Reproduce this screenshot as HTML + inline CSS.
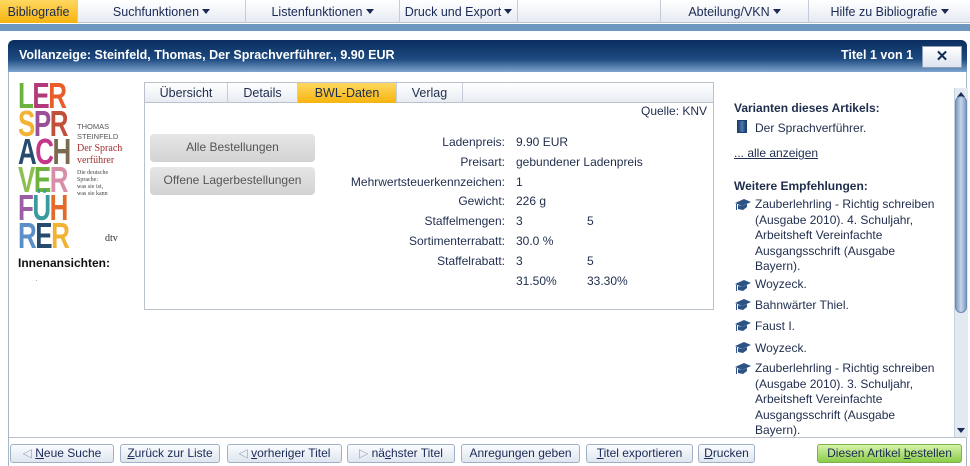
<!DOCTYPE html>
<html><head><meta charset="utf-8"><style>
*{margin:0;padding:0;box-sizing:border-box}
body{width:970px;height:466px;overflow:hidden;background:#fff;font-family:"Liberation Sans",Arial,sans-serif;font-size:12px;color:#1f2d4d;position:relative}
.a{position:absolute;white-space:nowrap}
.nav{position:absolute;left:0;top:0;width:970px;height:23px;background:linear-gradient(#fff,#e6ebf2);border-bottom:1px solid #b8c4d4}
.nav div{position:absolute;top:0;height:23px;line-height:24px;text-align:center;border-left:1px solid #c3ccd8;font-size:12.5px;color:#1b2a55}
.tri{display:inline-block;width:0;height:0;border-left:4px solid transparent;border-right:4px solid transparent;border-top:5px solid #1b2a55;vertical-align:2px;margin-left:3px}
.btn{position:absolute;top:444px;height:19px;line-height:17px;border:1px solid #9fb0c4;border-radius:3px;background:linear-gradient(#fafcff,#dfe6ef);text-align:center;font-size:12px;color:#1b2a55}
.lab{position:absolute;right:465px;text-align:right;white-space:nowrap}
.rec{position:absolute;left:755px;line-height:15.5px}
.row{position:absolute;left:0;transform:scaleX(0.72);transform-origin:0 0}
</style></head><body>
<div class="nav">
<div style="left:0;width:77px;background:linear-gradient(#ffd860,#f6b40e);border:none;color:#1b2a55">Bibliografie</div>
<div style="left:77px;width:168px">Suchfunktionen<span class="tri"></span></div>
<div style="left:245px;width:154px">Listenfunktionen<span class="tri"></span></div>
<div style="left:399px;width:118px">Druck und Export<span class="tri"></span></div>
<div style="left:517px;width:143px"></div>
<div style="left:660px;width:148px">Abteilung/VKN<span class="tri"></span></div>
<div style="left:808px;width:162px">Hilfe zu Bibliografie<span class="tri"></span></div>
</div>
<div class="a" style="left:0;top:24px;width:970px;height:7px;background:#6e97c0"></div>
<div class="a" style="left:8px;top:40px;width:959px;height:426px;border:1px solid #a9b6c6;border-radius:6px 6px 0 0;background:#fff"></div>
<div class="a" style="left:8px;top:40px;width:959px;height:32px;border-radius:6px 6px 0 0;background:linear-gradient(#0a2d5e 0%,#1d4a80 60%,#7fa5cf 100%);color:#fff;font-weight:bold;font-size:12.5px;line-height:30px;padding-left:11px">Vollanzeige: Steinfeld, Thomas, Der Sprachverführer., 9.90 EUR</div>
<div class="a" style="left:841px;top:40px;color:#fff;font-weight:bold;font-size:12.5px;line-height:30px">Titel 1 von 1</div>
<div class="a" style="left:922px;top:46px;width:40px;height:22px;background:linear-gradient(#fff,#dde4ee);border:1px solid #8aa0bb;text-align:center;font-weight:bold;font-size:15px;line-height:20px;color:#0d2a55">✕</div>
<div class="a" style="left:954px;top:88px;width:14px;height:350px;background:#e3e9f1;border-left:1px solid #c9d3df"></div>
<div class="a" style="left:957px;top:92px;width:0;height:0;border-left:4px solid transparent;border-right:4px solid transparent;border-bottom:5px solid #1b2a55"></div>
<div class="a" style="left:955px;top:96px;width:12px;height:217px;border-radius:6px;background:linear-gradient(90deg,#7e9cc2,#c6d6ea,#7e9cc2);border:1px solid #6a88b0"></div>
<div class="a" style="left:957px;top:428px;width:0;height:0;border-left:4px solid transparent;border-right:4px solid transparent;border-top:5px solid #1b2a55"></div>
<!-- book cover -->
<div class="a" style="left:18px;top:82px;width:105px;height:170px;background:#fff;overflow:hidden;font-weight:bold;font-size:36px;line-height:28px;letter-spacing:-2px">
<div class="row" style="top:0"><span style="color:#6cb33e">L</span><span style="color:#b23a7a">E</span><span style="color:#e85d2a">R</span></div>
<div class="row" style="top:28px"><span style="color:#f2b233">S</span><span style="color:#9b4f96">P</span><span style="color:#c0503a">R</span></div>
<div class="row" style="top:56px"><span style="color:#264b6e">A</span><span style="color:#c3388a">C</span><span style="color:#7a6a50">H</span></div>
<div class="row" style="top:84px"><span style="color:#8dbf4e">V</span><span style="color:#6cb33e">E</span><span style="color:#d98ea8">R</span></div>
<div class="row" style="top:112px"><span style="color:#9b5ea6">F</span><span style="color:#3b9a9c">Ü</span><span style="color:#e36a2a">H</span></div>
<div class="row" style="top:140px"><span style="color:#5a8fc8">R</span><span style="color:#264b6e">E</span><span style="color:#f2b233">R</span></div>
<div class="a" style="left:59px;top:40px;font-size:7.5px;line-height:10px;letter-spacing:0;font-weight:normal;color:#555">THOMAS<br>STEINFELD</div>
<div class="a" style="left:59px;top:61px;font-family:'Liberation Serif',serif;font-size:10px;line-height:12px;letter-spacing:0;font-weight:normal;color:#a03030">Der Sprach-<br>verführer</div>
<div class="a" style="left:59px;top:88px;font-family:'Liberation Serif',serif;font-size:6px;line-height:7px;letter-spacing:0;font-weight:normal;color:#444">Die deutsche<br>Sprache:<br>was sie ist,<br>was sie kann</div>
<div class="a" style="left:87px;top:151px;font-family:'Liberation Serif',serif;font-size:10px;line-height:12px;letter-spacing:0;font-weight:normal;color:#333">dtv</div>
</div>
<div class="a" style="left:18px;top:256px;font-weight:bold;font-size:12px;color:#111">Innenansichten:</div>
<div class="a" style="left:35px;top:276px;font-size:8px;color:#888">·</div>
<!-- tab panel -->
<div class="a" style="left:144px;top:82px;width:570px;height:228px;border:1px solid #b9c1cc"></div>
<div class="a" style="left:145px;top:83px;width:568px;height:20px;background:linear-gradient(#fff,#e8edf3);border-bottom:1px solid #b9c1cc"></div>
<div class="a" style="left:145px;top:83px;width:83px;height:20px;line-height:21px;text-align:center;font-size:12.5px;border-right:1px solid #c3ccd8">Übersicht</div>
<div class="a" style="left:228px;top:83px;width:70px;height:20px;line-height:21px;text-align:center;font-size:12.5px;border-right:1px solid #c3ccd8">Details</div>
<div class="a" style="left:298px;top:83px;width:98px;height:20px;line-height:21px;text-align:center;font-size:12.5px;background:linear-gradient(#ffd860,#f6b40e)">BWL-Daten</div>
<div class="a" style="left:396px;top:83px;width:67px;height:20px;line-height:21px;text-align:center;font-size:12.5px;border-left:1px solid #c3ccd8;border-right:1px solid #c3ccd8">Verlag</div>
<div class="a" style="left:641px;top:104px">Quelle: KNV</div>
<div class="a" style="left:150px;top:134px;width:165px;height:28px;border-radius:4px;background:linear-gradient(#e6e6e6,#d2d2d2);text-align:center;line-height:27px;color:#555">Alle Bestellungen</div>
<div class="a" style="left:150px;top:167px;width:165px;height:28px;border-radius:4px;background:linear-gradient(#e6e6e6,#d2d2d2);text-align:center;line-height:27px;color:#555">Offene Lagerbestellungen</div>
<div class="lab" style="top:135px">Ladenpreis:</div><div class="a" style="left:516px;top:135px">9.90 EUR</div>
<div class="lab" style="top:155px">Preisart:</div><div class="a" style="left:516px;top:155px">gebundener Ladenpreis</div>
<div class="lab" style="top:175px">Mehrwertsteuerkennzeichen:</div><div class="a" style="left:516px;top:175px">1</div>
<div class="lab" style="top:194px">Gewicht:</div><div class="a" style="left:516px;top:194px">226 g</div>
<div class="lab" style="top:214px">Staffelmengen:</div><div class="a" style="left:516px;top:214px">3</div><div class="a" style="left:587px;top:214px">5</div>
<div class="lab" style="top:234px">Sortimenterrabatt:</div><div class="a" style="left:516px;top:234px">30.0 %</div>
<div class="lab" style="top:254px">Staffelrabatt:</div><div class="a" style="left:516px;top:254px">3</div><div class="a" style="left:587px;top:254px">5</div>
<div class="a" style="left:516px;top:274px">31.50%</div><div class="a" style="left:587px;top:274px">33.30%</div>
<!-- right column -->
<div class="a" style="left:734px;top:101px;font-weight:bold">Varianten dieses Artikels:</div>
<div class="a" style="left:737px;top:120px;width:10px;height:13px;background:linear-gradient(90deg,#1d3f6e,#4d79ad,#1d3f6e);border:1px solid #1d3f6e"></div>
<div class="a" style="left:755px;top:121px">Der Sprachverführer.</div>
<div class="a" style="left:734px;top:146px;text-decoration:underline">... alle anzeigen</div>
<div class="a" style="left:734px;top:179px;font-weight:bold">Weitere Empfehlungen:</div>
<svg class="a" style="left:735px;top:0" width="16" height="466" viewBox="0 0 16 466">
<defs><g id="c" fill="#2d5384"><path d="M0 4 L9 0 L16 3 L7 7 Z"/><path d="M3 6 L3 10 L8 11 L12 8 L12 5 L7 7 Z"/><rect x="1" y="5" width="1" height="6"/></g></defs>
<use href="#c" y="199"/><use href="#c" y="280"/><use href="#c" y="299"/><use href="#c" y="320"/><use href="#c" y="342"/><use href="#c" y="363"/>
</svg>
<div class="rec" style="top:197px">Zauberlehrling - Richtig schreiben<br>(Ausgabe 2010). 4. Schuljahr,<br>Arbeitsheft Vereinfachte<br>Ausgangsschrift (Ausgabe<br>Bayern).</div>
<div class="rec" style="top:277px">Woyzeck.</div>
<div class="rec" style="top:298px">Bahnwärter Thiel.</div>
<div class="rec" style="top:319px">Faust I.</div>
<div class="rec" style="top:341px">Woyzeck.</div>
<div class="rec" style="top:361px">Zauberlehrling - Richtig schreiben<br>(Ausgabe 2010). 3. Schuljahr,<br>Arbeitsheft Vereinfachte<br>Ausgangsschrift (Ausgabe<br>Bayern).</div>
<!-- bottom bar -->
<div class="a" style="left:9px;top:437px;width:957px;height:29px;background:#fff;border-top:1px solid #b9c1cc"></div>
<div class="btn" style="left:10px;width:104px"><span style="color:#9aa8bb">◁</span> <u>N</u>eue Suche</div>
<div class="btn" style="left:120px;width:100px"><u>Z</u>urück zur Liste</div>
<div class="btn" style="left:227px;width:115px"><span style="color:#9aa8bb">◁</span> <u>v</u>orheriger Titel</div>
<div class="btn" style="left:347px;width:108px"><span style="color:#9aa8bb">▷</span> nä<u>c</u>hster Titel</div>
<div class="btn" style="left:461px;width:119px">Anre<u>g</u>ungen geben</div>
<div class="btn" style="left:586px;width:107px"><u>T</u>itel exportieren</div>
<div class="btn" style="left:698px;width:57px"><u>D</u>rucken</div>
<div class="btn" style="left:817px;width:145px;background:linear-gradient(#d6f2a8,#8ccd4a);border-color:#7fae4d">Diesen Artikel <u>b</u>estellen</div>
</body></html>
